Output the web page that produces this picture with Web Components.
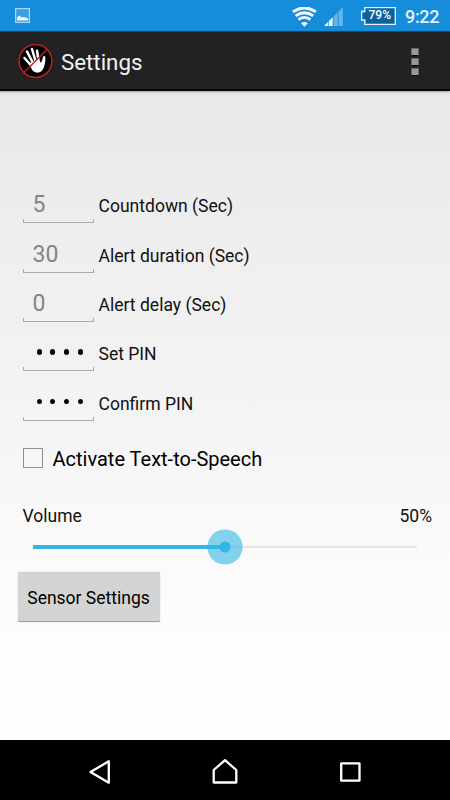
<!DOCTYPE html>
<html lang="en">
<head>
<meta charset="utf-8">
<title>Settings</title>
<style>
html,body{margin:0;height:100%}
body{font-family:Roboto,"Noto Sans",sans-serif;color:#111;overflow:hidden}
</style>
</head>
<body>
<settings-screen></settings-screen>
<script>
const define = (name, html) => customElements.define(name, class extends HTMLElement {
  constructor() {
    super();
    this.attachShadow({mode: 'open'}).innerHTML = html;
  }
});

define('status-bar', `
<style>
:host{display:flex;height:31px;background:#158ddb;align-items:flex-start;color:#e6f4fd;box-sizing:border-box}
svg{display:block;flex:none}
.photo{margin:8px 0 0 15px}
.wifi{margin:7px 0 0 auto}
.signal{margin:7px 0 0 7px}
.battery{margin:7px 0 0 18.500px;display:grid;width:35px;height:18px}
.battery>*{grid-area:1/1}
.battery span{font-size:12px;font-weight:500;line-height:17px;padding-left:7.500px;color:#fff}
time{font-size:18px;font-weight:500;line-height:21px;margin:6px 11px 0 9px;width:34px;white-space:nowrap;letter-spacing:-.35px}
</style>
<svg class="photo" width="15" height="15"><rect x=".6" y=".6" width="13.8" height="13.8" fill="#3c9fe0" stroke="#a9d6f4" stroke-width="1.2"/><path d="M2 12.6V9.5L4.5 7.5L6.5 9.5L8.5 9L10.5 9.5L13 10.5V12.6Z" fill="#f2faff"/></svg>
<svg class="wifi" width="25" height="20" fill="none" stroke="#f2faff"><path d="M12.4 19.7L9 16.2Q12.4 14 15.8 16.2Z" fill="#f2faff" stroke="none"/><path d="M.9 4.8Q12.4 -3 23.9 4.8" stroke-width="2.9"/><path d="M3.6 8.8Q12.4 2.6 21.2 8.8" stroke-width="2.8"/><path d="M6.3 12.7Q12.4 8 18.5 12.7" stroke-width="2.8"/></svg>
<svg class="signal" width="19" height="19"><path d="M0 19L4 15V19ZM4.700 14.300L8.700 10.300V19H4.700Z" fill="#f2faff"/><path d="M9.700 9.300L13.700 5.300V19H9.700ZM14.600 4.400L18.800 0V19H14.600Z" fill="#67b5e8"/></svg>
<div class="battery"><svg width="35" height="18"><path d="M3.800 .6H34.300V17.300H3.800V13H.7V4.500H3.800Z" fill="#0d629d" stroke="#e4f3fd" stroke-width="1.300"/></svg><span>79%</span></div>
<time>9:22</time>`);

define('action-bar', `
<style>
:host{display:flex;height:60px;background:#222;border-top:1px solid #174c70;border-bottom:2px solid #080808;box-sizing:border-box;align-items:center;color:#f3f3f3;box-shadow:0 1px 2px #0005;position:relative;margin-bottom:-1px}
.logo{margin-left:18px}
h1{font-size:22.300px;font-weight:400;line-height:26px;margin:3px 0 0 8px}
.more{margin:0 31px 0 auto;display:grid;gap:2.400px;padding-top:3px}
.more i{width:6px;height:6px;background:#999;border:.5px solid #666;border-bottom:1px solid #050505;box-sizing:content-box}
</style>
<svg class="logo" width="35" height="36" viewBox="0 0 35 36"><circle cx="17.500" cy="18" r="16.400" fill="#000" stroke="#b92022" stroke-width="1.500"/>
<g stroke="#fff" stroke-linecap="round" stroke-width="2.500" fill="none"><path d="M6.500 15L13.500 23"/><path d="M9 8.500L15 20"/><path d="M14 6L17.500 18"/><path d="M19 7.700L20.600 18"/></g><path d="M12 20L20 16L22.500 19.500Q24 19.500 24.800 14.500Q25.700 12.300 27.300 13.500Q27.800 20 26 24Q24 29.500 19.500 29.700Q13.500 29 12.800 23Z" fill="#fff"/><path d="M6 29.500L29 6.500" stroke="#c41d20" stroke-width="1.500"/></svg>
<h1><slot></slot></h1><div class="more"><i></i><i></i><i></i></div>`);

define('field-row', `
<style>
:host{display:flex;height:49.400px;align-items:flex-end}
.box{width:71px;height:4px;border:1px solid #aaa;border-top:0;box-sizing:border-box}
.field{display:flex;flex-direction:column;width:71px}
.value{height:27px;line-height:26px;padding-left:10px;font-size:23px;color:#858585;box-sizing:border-box}
label{font-size:17.550px;line-height:22px;margin:0 0 6px 5px;white-space:nowrap}
</style>
<div class="field"><div class="value"><slot name="value"></slot></div><div class="box"></div></div><label><slot></slot></label>`);

define('pin-dots', `
<style>
:host{display:flex;gap:8.800px;height:23px;padding:0 0 0 4px;align-items:center}
i{width:5px;height:5.500px;border-radius:50%;background:#000}
</style><i></i><i></i><i></i><i></i>`);

define('check-option', `
<style>
:host{display:flex;align-items:center;gap:10px;height:24px;font-size:20px;color:#000}
i{width:20px;height:20px;border:1px solid #919191;box-sizing:border-box}
span{line-height:24px;padding-top:2px}
</style><i></i><span><slot></slot></span>`);

define('volume-slider', `
<style>
:host{display:block}
.labels{display:flex;justify-content:space-between;font-size:17.500px;line-height:22px}
svg{display:block;margin:1px 0 0 9px}
</style>
<div class="labels"><slot></slot><slot name="amount"></slot></div>
<svg width="387" height="38"><path d="M1 19H385" stroke="#dedede" stroke-width="1.700"/><circle cx="193" cy="19" r="17.600" fill="#33b5e5" fill-opacity=".6"/><path d="M1 19H193" stroke="#33b5e5" stroke-width="4"/><circle cx="193" cy="19" r="5.600" fill="#33b5e5"/></svg>`);

define('push-button', `
<style>
:host{display:block}
button{display:block;width:142px;height:50px;border:0;border-bottom:1.500px solid #a0a0a0;border-radius:2px;background:#d4d4d4;font:17.500px Roboto,sans-serif;color:#000;padding:3px 0 0;white-space:nowrap;box-shadow:0 0 1px #999}
</style><button><slot></slot></button>`);

define('nav-bar', `
<style>
:host{display:grid;grid-template-columns:repeat(3,125px);justify-content:center;height:60px;background:#000;align-items:center;justify-items:center}
svg{fill:none;stroke:#fff;stroke-width:2.300;stroke-linejoin:round;padding-top:3px}
</style>
<svg width="26" height="26"><path d="M21.800 2.300V23.700L3.500 13Z"/></svg>
<svg width="26" height="26"><path d="M13 1.200L24.300 11V23.500H1.700V11Z"/></svg>
<svg width="26" height="26"><path d="M4.200 4.300H22.500V21.700H4.200Z"/></svg>`);

define('settings-screen', `
<style>
:host{display:flex;flex-direction:column;width:450px;height:800px}
main{flex:1;background:linear-gradient(#e8e8e8,#eee 22%,#f4f4f4 50%,#f9f9f9 66%,#fdfdfd 85%,#fff);box-sizing:border-box;padding:83.800px 18px 0 22.500px}
check-option{margin-top:25px}
volume-slider{margin-top:35px}
push-button{margin:6px 0 0 -5px}
</style>
<status-bar></status-bar>
<action-bar>Settings</action-bar>
<main>
<field-row><span slot="value">5</span>Countdown (Sec)</field-row>
<field-row><span slot="value">30</span>Alert duration (Sec)</field-row>
<field-row><span slot="value">0</span>Alert delay (Sec)</field-row>
<field-row><pin-dots slot="value"></pin-dots>Set PIN</field-row>
<field-row><pin-dots slot="value"></pin-dots>Confirm PIN</field-row>
<check-option>Activate Text-to-Speech</check-option>
<volume-slider>Volume<span slot="amount">50%</span></volume-slider>
<push-button>Sensor Settings</push-button>
</main>
<nav-bar></nav-bar>`);
</script>
</body>
</html>
